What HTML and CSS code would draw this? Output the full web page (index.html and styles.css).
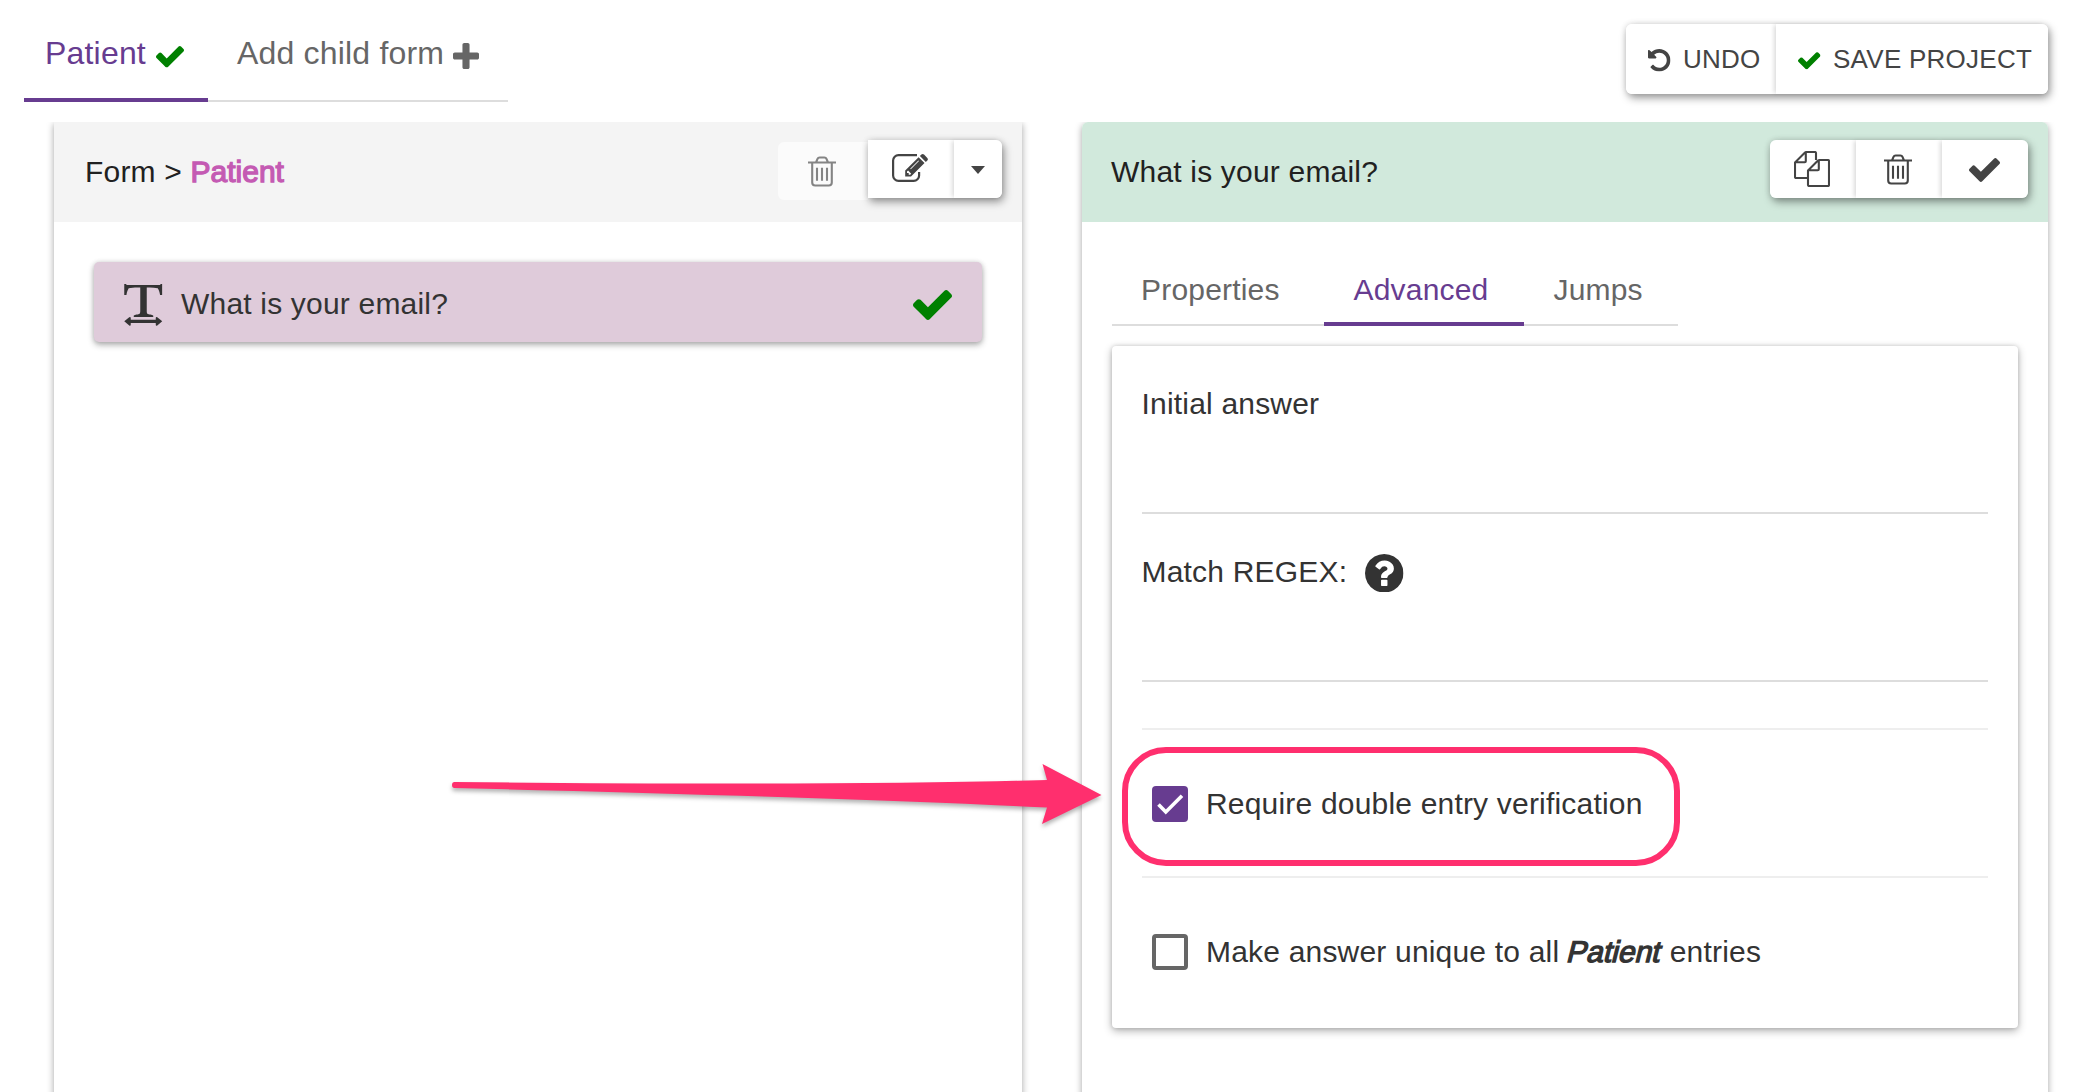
FILE: index.html
```html
<!DOCTYPE html>
<html lang="en">
<head>
<meta charset="utf-8">
<title>Form builder</title>
<link rel="stylesheet" href="styles.css">
</head>
<body>
<svg class="defs" width="0" height="0" aria-hidden="true">
  <symbol id="check" viewBox="121 334 1550 1188"><path fill="currentColor" d="M1671 566q0 40-28 68l-724 724-136 136q-28 28-68 28t-68-28l-136-136-362-362q-28-28-28-68t28-68l136-136q28-28 68-28t68 28l294 295 656-657q28-28 68-28t68 28l136 136q28 28 28 68z"/></symbol>
  <symbol id="plus" viewBox="192 128 1408 1408"><path fill="currentColor" d="M1600 736v192q0 40-28 68t-68 28h-416v416q0 40-28 68t-68 28h-192q-40 0-68-28t-28-68v-416h-416q-40 0-68-28t-28-68v-192q0-40 28-68t68-28h416v-416q0-40 28-68t68-28h192q40 0 68 28t28 68v416h416q40 0 68 28t28 68z"/></symbol>
  <symbol id="undo" viewBox="128 128 1536 1536"><path fill="currentColor" d="M1664 896q0 156-61 298t-164 245-245 164-298 61q-172 0-327-72.500t-264-204.500q-7-10-6.500-22.500t8.500-20.500l137-138q10-9 25-9 16 2 23 12 73 95 179 147t225 52q104 0 198.500-40.500t163.500-109.500 109.500-163.500 40.500-198.500-40.500-198.500-109.500-163.500-163.500-109.500-198.500-40.500q-98 0-188 35.500t-160 101.500l137 138q31 30 14 69-17 40-59 40h-448q-26 0-45-19t-19-45v-448q0-42 40-59 39-17 69 14l130 129q107-101 244.500-156.500t284.500-55.500q156 0 298 61t245 164 164 245 61 298z"/></symbol>
  <symbol id="question" viewBox="128 128 1536 1536"><path fill="currentColor" d="M1024 1376v-192q0-14-9-23t-23-9h-192q-14 0-23 9t-9 23v192q0 14 9 23t23 9h192q14 0 23-9t9-23zm256-672q0-88-55.500-163t-138.500-116-170-41q-243 0-371 213-15 24 8 42l132 100q7 6 19 6 16 0 25-12 53-68 86-92 34-24 86-24 48 0 85.500 26t37.500 59q0 38-20 61t-68 45q-63 28-115.500 86.500t-52.500 125.500v36q0 14 9 23t23 9h192q14 0 23-9t9-23q0-19 21.500-49.500t54.500-49.500q32-18 49-28.500t46-35 44.500-48 28-60.500 12.500-81zm384 192q0 209-103 385.500t-279.500 279.500-385.500 103-385.500-103-279.500-279.500-103-385.500 103-385.500 279.500-279.500 385.500-103 385.500 103 279.500 279.500 103 385.500z"/></symbol>
  <symbol id="trash" viewBox="0 0 28 30"><g fill="none" stroke="currentColor" stroke-width="2.100"><path d="M0 6h28M4.200 6v20a3 3 0 0 0 3 3h13.600a3 3 0 0 0 3-3V6M8 6l1.500-3.600Q10.100 1 11.600 1h4.800q1.500 0 2.100 1.400L20 6"/><path d="M9 11.200v13M14 11.200v13M19 11.200v13"/></g></symbol>
  <symbol id="copy" viewBox="0 0 36 36"><g fill="none" stroke="currentColor" stroke-width="2.100" stroke-linejoin="round"><path d="M13 27H2a1 1 0 0 1-1-1V11.500L11 1.600Q11.700 1 12.500 1H21a1 1 0 0 1 1 1v7M1.500 11.300h9.300a1 1 0 0 0 1-1V1.500"/><path d="M14 19.500L24 9.600Q24.700 9 25.500 9H34a1 1 0 0 1 1 1v24a1 1 0 0 1-1 1H15a1 1 0 0 1-1-1zM14.500 19.300h9.300a1 1 0 0 0 1-1V9.500"/></g></symbol>
  <symbol id="edit" viewBox="0 0 36 28"><path fill="none" stroke="currentColor" stroke-width="2.200" d="M25 1.100H6.500a5.400 5.400 0 0 0-5.400 5.400v15a5.400 5.400 0 0 0 5.400 5.400h15.200a5.400 5.400 0 0 0 5.400-5.400V18"/><path fill="currentColor" fill-rule="evenodd" d="M13.200 16.500L26.600 3.200l5.900 5.800L19 22.600h-5.800zM15 17.600v1.500h1.700v1.700h1.400l1.100-1.100-3.100-3.200zM18.800 15.300l8.200-8.200-.6-.6-8.200 8.200z"/><path fill="currentColor" d="M27.900 2l1.500-1.400q1.300-1.200 2.600 0l3.300 3.300q1.200 1.300 0 2.600l-1.500 1.400z"/></symbol>
  <symbol id="text-width" viewBox="0 0 38 42"><path fill="currentColor" d="M0 0h1.600l1 1h33l1-1H38v11h-2.200C35.300 8 34.500 5.500 33.500 4.300 30 3.500 26 3.400 22.500 3.600V27c0 1.800.3 2.700 1.200 3 1.800.7 5.300.8 5.300 1.700V33H9.500v-1.300c0-.9 3.500-1 5.300-1.700.9-.3 1.200-1.200 1.200-3V3.600C12.500 3.400 8 3.500 4.500 4.300 3.500 5.500 2.700 8 2.200 11H0zM0 37.300l5-4.100q1.500-.7 1.500 1v1.500h25v-1.500q0-1.700 1.500-1l5 4.100-5 4.200q-1.500.7-1.500-1v-1.600h-25v1.600q0 1.700-1.500 1z"/></symbol>
</svg>

<header class="topbar">
  <nav class="tabs">
    <a class="form-tab active">Patient<svg class="icon-tab-check"><use href="#check"/></svg></a>
    <a class="form-tab add">Add child form<svg class="icon-plus"><use href="#plus"/></svg></a>
  </nav>
  <div class="button-group actions">
    <button class="btn btn-undo"><svg class="icon-undo"><use href="#undo"/></svg>UNDO</button>
    <button class="btn btn-save"><svg class="icon-save"><use href="#check"/></svg>SAVE PROJECT</button>
  </div>
</header>

<main class="panels">
  <section class="panel form-panel">
    <div class="panel-head">
      <h2 class="title">Form &gt; <span class="form-name">Patient</span></h2>
      <div class="form-tools">
        <button class="btn btn-disabled" disabled><svg class="icon-trash"><use href="#trash"/></svg></button>
        <div class="button-group square-left">
          <button class="btn btn-icon"><svg class="icon-edit"><use href="#edit"/></svg></button>
          <button class="btn btn-caret"><span class="caret"></span></button>
        </div>
      </div>
    </div>
    <div class="question">
      <svg class="icon-text"><use href="#text-width"/></svg>
      <span class="question-text">What is your email?</span>
      <svg class="icon-valid"><use href="#check"/></svg>
    </div>
  </section>

  <section class="panel input-panel">
    <div class="panel-head">
      <h2 class="title">What is your email?</h2>
      <div class="button-group">
        <button class="btn btn-icon"><svg class="icon-copy"><use href="#copy"/></svg></button>
        <button class="btn btn-icon"><svg class="icon-trash"><use href="#trash"/></svg></button>
        <button class="btn btn-icon"><svg class="icon-done"><use href="#check"/></svg></button>
      </div>
    </div>
    <div class="panel-body">
      <nav class="tabs">
        <a class="tab tab-properties">Properties</a>
        <a class="tab tab-advanced active">Advanced</a>
        <a class="tab tab-jumps">Jumps</a>
      </nav>
      <div class="card">
        <div class="field"><label>Initial answer</label></div>
        <div class="field"><label>Match REGEX:<svg class="icon-help"><use href="#question"/></svg></label></div>
        <div class="option first">
          <span class="checkbox checked"><svg viewBox="0 0 36 36"><path d="M6.500 18.500l7.300 7.500L30 9.800" fill="none" stroke="#fff" stroke-width="3.600"/></svg></span>
          <span>Require double entry verification</span>
          <div class="highlight"></div>
        </div>
        <div class="option">
          <span class="checkbox"></span>
          <span>Make answer unique to all <em class="form-ref">Patient</em> entries</span>
        </div>
      </div>
    </div>
  </section>
</main>

<svg class="arrow" width="670" height="80" viewBox="442 754 670 80"><path d="M454.500 782Q832 786 1047 780L1042.500 764L1101.500 795L1042 824L1047 807.500Q832 797 454.500 788Q452 788 452 785T454.500 782z" fill="#ff2f6e"/></svg>
</body>
</html>
```
FILE: styles.css
```css
* { box-sizing: border-box; }

body {
  margin: 0;
  width: 2084px;
  height: 1092px;
  overflow: hidden;
  position: relative;
  background: #fff;
  color: #333;
  font: 30px/40px "Liberation Sans", Arial, sans-serif;
  letter-spacing: 0.190px;
}

.defs { position: absolute; }
svg { display: block; flex: none; }

/* top bar */
.topbar {
  display: flex;
  justify-content: space-between;
  align-items: flex-start;
  height: 122px;
  padding: 0 36px 0 24px;
}
.tabs { display: flex; }
.form-tab {
  display: flex;
  height: 102px;
  padding-top: 33px;
  font-size: 32px;
  color: #666;
  border-bottom: 2px solid #ddd;
}
.form-tab.active {
  width: 184px;
  padding-left: 21px;
  color: #673c90;
  border-bottom: 4px solid #673c90;
}
.form-tab.add { width: 300px; padding-left: 29px; }
.icon-tab-check { width: 28px; height: 21.500px; margin: 13px 0 0 10.500px; color: green; }
.icon-plus { width: 26px; height: 26px; margin: 9.500px 0 0 9px; }

/* buttons */
.button-group {
  display: flex;
  border-radius: 6px;
  box-shadow: 2px 4px 8px rgba(0, 0, 0, .38), 0 0 6px rgba(0, 0, 0, .12);
}
.btn {
  display: flex;
  align-items: center;
  justify-content: center;
  margin: 0;
  padding: 0;
  border: 0;
  background: #fff;
  color: #444;
  font: 26px/40px "Liberation Sans", Arial, sans-serif;
  letter-spacing: 0.260px;
}
.button-group .btn:first-child { border-radius: 6px 0 0 6px; }
.button-group .btn:last-child { border-radius: 0 6px 6px 0; }
.button-group .btn + .btn { box-shadow: -3px 0 4px -1px rgba(0, 0, 0, .14); }
.actions { margin-top: 24px; }
.actions .btn { height: 70px; justify-content: flex-start; }
.actions .btn-undo { width: 150px; padding-left: 22px; }
.actions .btn-save { width: 272px; padding-left: 22px; }
.icon-undo { width: 22.500px; height: 22.500px; margin: 3px 12.500px 0 0; }
.icon-save { width: 22.500px; height: 17.500px; margin: 4px 12.500px 0 0; color: green; }
.btn-icon { width: 86px; height: 58px; padding-right: 1.500px; }
.btn-caret { width: 48px; height: 58px; }
.caret {
  border: 7.500px solid transparent;
  border-top: 8px solid #444;
  border-bottom: 0;
  margin-top: 2px;
}
.button-group.square-left, .button-group.square-left .btn:first-child { border-top-left-radius: 0; border-bottom-left-radius: 0; }
.icon-trash { width: 28px; height: 31px; }
.icon-copy { width: 36px; height: 36px; }
.icon-edit { width: 36px; height: 28px; margin-top: -2px; }
.icon-done { width: 31px; height: 24px; margin-top: 2px; }
.form-tools { display: flex; align-items: flex-start; }
.btn-disabled {
  width: 90px;
  height: 58px;
  margin-top: 2px;
  padding-right: 2px;
  background: #fbfbfb;
  color: #848484;
  border-radius: 6px 0 0 6px;
}
.form-tools .button-group { position: relative; }

/* panels */
.panels {
  display: flex;
  gap: 60px;
  height: 970px;
  padding: 0 36px 0 54px;
  overflow: hidden;
}
.panel { height: 1010px; background: #fff; box-shadow: 0 2px 7px rgba(0, 0, 0, .36); }
.form-panel { width: 968px; }
.input-panel { width: 966px; border-radius: 6px 6px 0 0; }
.panel-head {
  display: flex;
  align-items: center;
  justify-content: space-between;
  height: 100px;
  background: #f4f4f4;
  color: #212121;
}
.title { margin: 0; font: inherit; }
.form-panel .panel-head { padding: 0 20px 0 31px; }
.form-panel .form-tools { height: 64px; }
.input-panel .panel-head { padding: 0 20px 0 29px; background: #d1e9dc; border-radius: 6px 6px 0 0; }
.input-panel .button-group { margin-top: -6px; }
.form-name { color: #c45ab3; letter-spacing: 0; -webkit-text-stroke: 1.300px #c45ab3; }

.question {
  display: flex;
  align-items: center;
  height: 80px;
  margin: 40px 40px 0;
  padding: 0 30px;
  border-radius: 5px;
  background: #dfcbda;
  box-shadow: 0 3px 6px rgba(0, 0, 0, .3), 0 0 5px rgba(0, 0, 0, .12);
}
.icon-text { width: 38.500px; height: 42px; margin-top: 5px; }
.question-text { flex: 1; margin: 3px 0 0 18.500px; }
.icon-valid { width: 39px; height: 30px; margin-top: 6px; color: green; }

.panel-body { padding: 0 30px; }
.tab {
  height: 104px;
  padding-top: 47.500px;
  border-bottom: 2px solid #ddd;
  color: #666;
}
.tab-properties { width: 212px; padding-left: 29px; }
.tab-advanced { width: 200px; padding-left: 29.500px; }
.tab-jumps { width: 154px; padding-left: 29.500px; }
.tab.active { border-bottom: 4px solid #673c90; color: #673c90; }

.card {
  height: 682px;
  margin: 20px 0 0;
  width: 906px;
  padding: 0 30px;
  border-radius: 4px;
  background: #fff;
  box-shadow: 0 3px 8px rgba(0, 0, 0, .3), 0 0 4px rgba(0, 0, 0, .14);
}
.field { height: 168px; padding-top: 37.500px; border-bottom: 2px solid #ddd; }
.field label { display: flex; margin-left: -.5px; }
.icon-help { width: 38.500px; height: 38.500px; margin: 2px 0 0 18px; }
.option {
  display: flex;
  align-items: center;
  position: relative;
  height: 148px;
  padding: 2px 0 0 10px;
  border-top: 2px solid #eee;
}
.option.first { margin-top: 46px; }
.checkbox {
  width: 36px;
  height: 36px;
  margin-right: 18px;
  border: 4px solid #666;
  border-radius: 4px;
}
.checkbox.checked { border: 0; background: #673c90; }
.form-ref {
  display: inline-block;
  font-style: normal;
  letter-spacing: 0;
  transform: skewX(-14deg);
  -webkit-text-stroke: 1.300px #333;
}

/* annotations */
.highlight {
  position: absolute;
  left: -20px;
  top: 17px;
  width: 558px;
  height: 119px;
  border: 6px solid #ff2f6e;
  border-radius: 44px;
}
.arrow {
  position: absolute;
  left: 442px;
  top: 754px;
  filter: drop-shadow(0 3px 2px rgba(0, 0, 0, .3));
}
```
